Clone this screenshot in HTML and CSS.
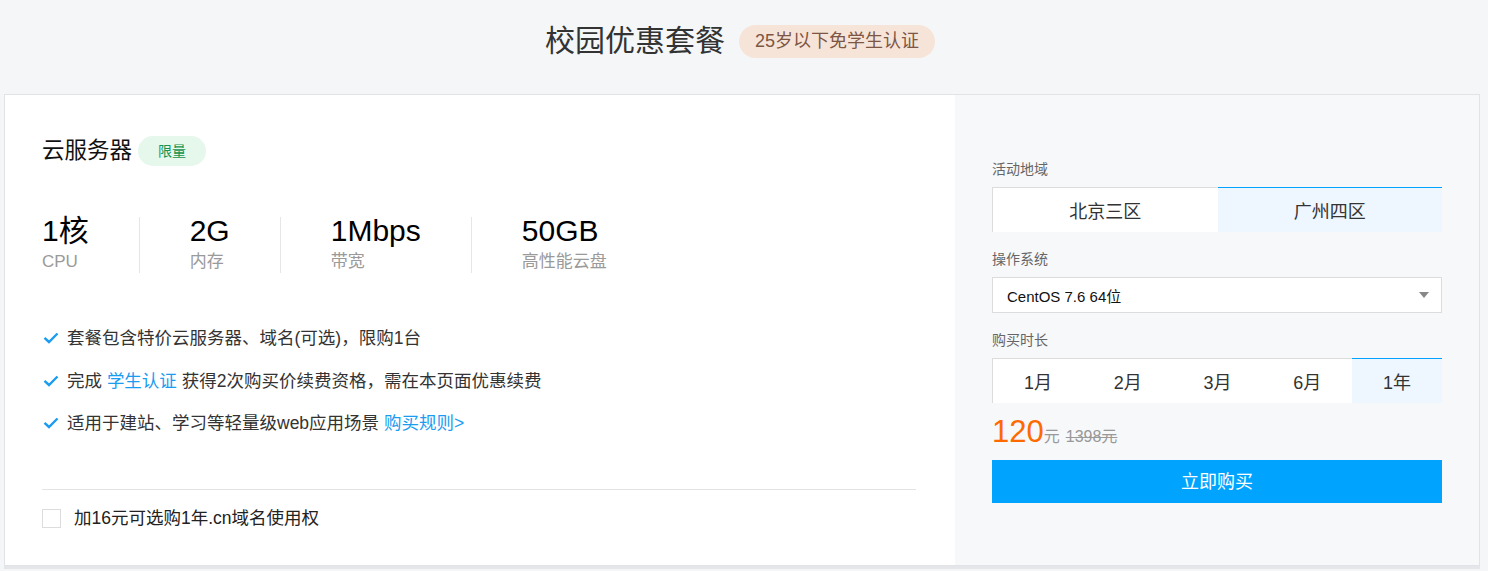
FILE: index.html
```html
<!DOCTYPE html>
<html lang="zh-CN">
<head>
<meta charset="utf-8">
<title>校园优惠套餐</title>
<link rel="stylesheet" href="styles.css">
</head>
<body>
<header class="header">
  <h1 class="title">校园优惠套餐</h1>
  <span class="title-badge">25岁以下免学生认证</span>
</header>
<section class="card">
  <div class="card-main">
    <div class="product-head">
      <h2 class="product-name">云服务器</h2>
      <span class="tag-limited">限量</span>
    </div>
    <div class="specs">
      <div class="spec"><div class="spec-val">1核</div><div class="spec-label">CPU</div></div>
      <div class="spec"><div class="spec-val">2G</div><div class="spec-label">内存</div></div>
      <div class="spec"><div class="spec-val">1Mbps</div><div class="spec-label">带宽</div></div>
      <div class="spec"><div class="spec-val">50GB</div><div class="spec-label">高性能云盘</div></div>
    </div>
    <ul class="features">
      <li class="feature"><svg class="check" viewBox="0 0 16 12" width="16" height="12"><path d="M1.5 5.8 L6 10 L14.5 1.5" fill="none" stroke="#1a9cf0" stroke-width="2.4"/></svg><span>套餐包含特价云服务器、域名(可选)，限购1台</span></li>
      <li class="feature"><svg class="check" viewBox="0 0 16 12" width="16" height="12"><path d="M1.5 5.8 L6 10 L14.5 1.5" fill="none" stroke="#1a9cf0" stroke-width="2.4"/></svg><span>完成 <a class="link" href="#">学生认证</a> 获得2次购买价续费资格，需在本页面优惠续费</span></li>
      <li class="feature"><svg class="check" viewBox="0 0 16 12" width="16" height="12"><path d="M1.5 5.8 L6 10 L14.5 1.5" fill="none" stroke="#1a9cf0" stroke-width="2.4"/></svg><span>适用于建站、学习等轻量级web应用场景 <a class="link" href="#">购买规则&gt;</a></span></li>
    </ul>
    <div class="divider"></div>
    <label class="addon">
      <span class="checkbox"></span>
      <span>加16元可选购1年.cn域名使用权</span>
    </label>
  </div>
  <aside class="card-side">
    <div class="field-label">活动地域</div>
    <div class="seg seg-2">
      <div class="seg-item">北京三区</div>
      <div class="seg-item active">广州四区</div>
    </div>
    <div class="field-label mt">操作系统</div>
    <div class="select">
      <span>CentOS 7.6 64位</span>
      <span class="caret"></span>
    </div>
    <div class="field-label mt">购买时长</div>
    <div class="seg seg-5">
      <div class="seg-item">1月</div>
      <div class="seg-item">2月</div>
      <div class="seg-item">3月</div>
      <div class="seg-item">6月</div>
      <div class="seg-item active">1年</div>
    </div>
    <div class="price">
      <span class="price-num">120</span><span class="price-unit">元</span>
      <span class="price-old">1398元</span>
    </div>
    <button class="buy">立即购买</button>
  </aside>
</section>
</body>
</html>
```

FILE: styles.css
```css
* { box-sizing: border-box; }
html, body { margin: 0; padding: 0; }
body {
  background: #f5f6f8;
  font-family: "Liberation Sans", "Noto Sans CJK SC", sans-serif;
  color: #333;
  width: 1488px;
  height: 571px;
  overflow: hidden;
}
.header {
  display: flex;
  align-items: center;
  justify-content: center;
  gap: 14px;
  padding: 22px 8px 34px 0;
}
.title {
  margin: 0;
  font-size: 30px;
  font-weight: normal;
  line-height: 38px;
  color: #333;
}
.title-badge {
  height: 33px;
  line-height: 33px;
  padding: 0 16px;
  border-radius: 17px;
  background: #f7e4d9;
  color: #7d5644;
  font-size: 18px;
}
.card {
  margin-left: 4px;
  width: 1476px;
  height: 472px;
  border: 1px solid #e1e3e6;
  display: flex;
  box-shadow: 0 3px 0 #e4e6ea;
}
.card-main {
  width: 950px;
  background: #fff;
  padding: 41px 37px 0 37px;
}
.product-head {
  display: flex;
  align-items: center;
  gap: 6px;
}
.product-name {
  margin: 0;
  font-size: 22.5px;
  font-weight: normal;
  line-height: 30px;
  color: #111;
}
.tag-limited {
  height: 30px;
  line-height: 30px;
  padding: 0 20px;
  border-radius: 15px;
  background: #e6f7ec;
  color: #14944f;
  font-size: 14px;
}
.specs {
  display: flex;
  margin-top: 51px;
}
.spec {
  padding: 0 50px;
  border-right: 1px solid #e6e6e6;
}
.spec:first-child { padding-left: 0; }
.spec:last-child { border-right: none; }
.spec-val {
  font-size: 30px;
  line-height: 28px;
  color: #000;
  white-space: nowrap;
}
.spec-label {
  margin-top: 6px;
  font-size: 17px;
  line-height: 22px;
  color: #9a9a9a;
  white-space: nowrap;
}
.features {
  list-style: none;
  margin: 53px 0 0 0;
  padding: 0;
}
.feature {
  display: flex;
  align-items: center;
  gap: 8px;
  font-size: 17.5px;
  line-height: 24px;
  color: #333;
  margin-bottom: 18.5px;
  padding-left: 1px;
}
.feature:last-child { margin-bottom: 0; }
.check { flex: none; }
.link { color: #1a9cf0; text-decoration: none; }
.divider {
  margin-top: 54px;
  height: 1px;
  background: #e3e3e3;
  width: 874px;
}
.addon {
  display: flex;
  align-items: center;
  gap: 13px;
  margin-top: 18px;
  font-size: 17.5px;
  line-height: 20px;
  color: #222;
}
.checkbox {
  width: 19px;
  height: 19px;
  border: 1px solid #dcdcdc;
  background: #fff;
}
.card-side {
  flex: 1;
  background: #f7f8fa;
  padding: 64px 37px 0 37px;
}
.field-label {
  font-size: 14px;
  line-height: 20px;
  color: #666;
  margin-bottom: 8px;
}
.field-label.mt { margin-top: 17px; }
.seg {
  display: grid;
  height: 45px;
  border-top: 1px solid #dcdcdc;
  border-left: 1px solid #dcdcdc;
  background: #fff;
}
.seg-2 { grid-template-columns: 1fr 1fr; }
.seg-5 { grid-template-columns: repeat(5, 1fr); }
.seg-item {
  display: flex;
  align-items: center;
  justify-content: center;
  font-size: 18px;
  color: #333;
  margin-top: -1px;
  border-top: 1px solid transparent;
}
.seg-item.active {
  background: #eef6ff;
  border-top-color: #00a4ff;
}
.select {
  height: 36px;
  border: 1px solid #dcdcdc;
  background: #fff;
  display: flex;
  align-items: center;
  justify-content: space-between;
  padding: 0 12px 0 14px;
  font-size: 15px;
  color: #111;
}
.caret {
  width: 0;
  height: 0;
  border-left: 5px solid transparent;
  border-right: 5px solid transparent;
  border-top: 6px solid #888;
}
.price {
  margin-top: 9px;
  height: 40px;
  display: flex;
  align-items: baseline;
}
.price-num {
  font-size: 31px;
  line-height: 40px;
  color: #ff6a00;
}
.price-unit {
  font-size: 16px;
  color: #999;
}
.price-old {
  margin-left: 6px;
  font-size: 16px;
  color: #999;
  text-decoration: line-through;
}
.buy {
  display: block;
  width: 100%;
  margin-top: 8px;
  height: 43px;
  border: none;
  background: #00a4ff;
  color: #fff;
  font-family: inherit;
  font-size: 18px;
  padding: 0 0 3px 0;
  cursor: pointer;
}
```
